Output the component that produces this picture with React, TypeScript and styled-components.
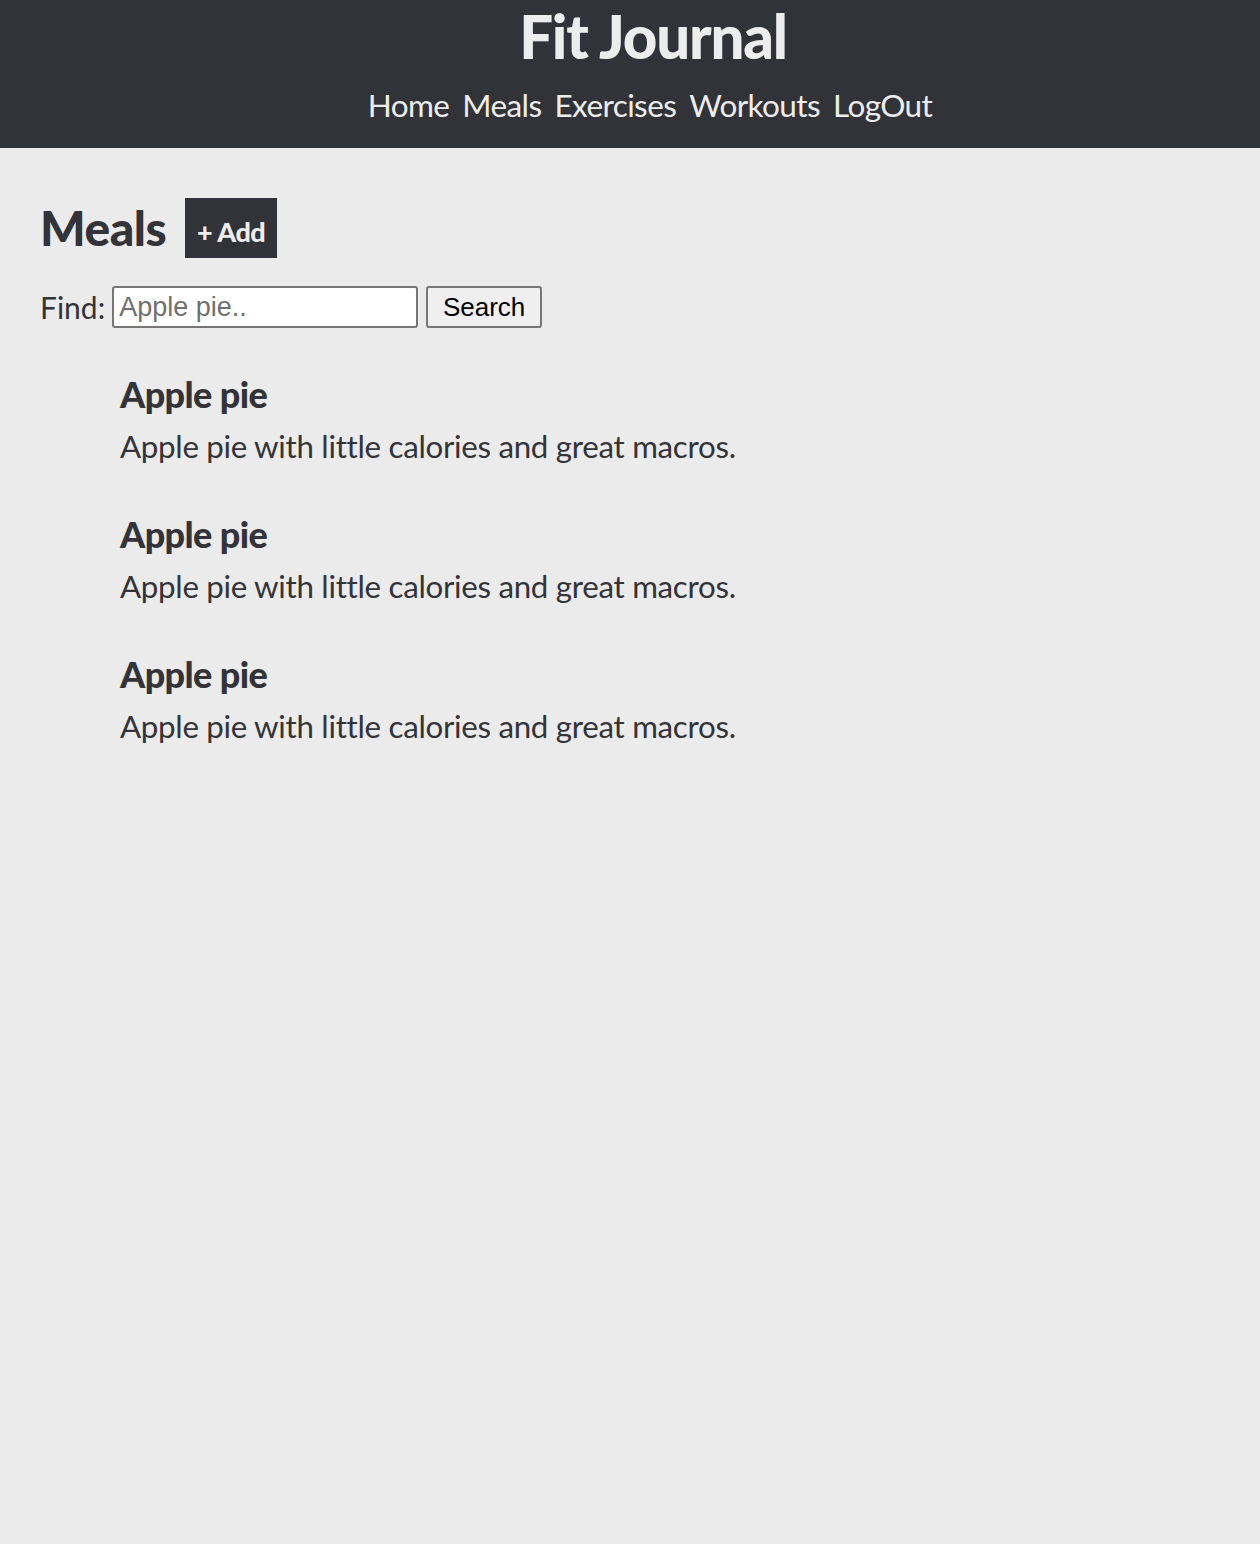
import React from "react";
import styled, { createGlobalStyle } from "styled-components";

const Global = createGlobalStyle`
  html, body { margin: 0; padding: 0; }
  body {
    background: #ebebeb;
    font-family: Lato, "Open Sans", sans-serif;
    color: #333339;
    min-height: 1544px;
  }
`;

const Header = styled.header`
  background: #323338;
  height: 148px;
  box-sizing: border-box;
  padding-left: 40px;
  display: flex;
  flex-direction: column;
  align-items: center;
  color: #ededed;
`;

const Title = styled.h1`
  margin: 0 0 0 6px;
  padding-top: 4px;
  font-size: 60px;
  font-weight: 900;
  line-height: 64px;
  letter-spacing: -1.2px;
`;

const Nav = styled.nav`
  display: flex;
  gap: 13px;
  margin-top: 17px;
`;

const NavLink = styled.a`
  font-size: 31.5px;
  line-height: 40px;
  color: #ededed;
  text-decoration: none;
  letter-spacing: -0.6px;
`;

const Main = styled.main`
  padding: 50px 40px;
`;

const TitleRow = styled.div`
  display: flex;
  align-items: center;
  gap: 19px;
`;

const PageTitle = styled.h2`
  margin: 0;
  font-size: 48px;
  font-weight: 900;
  line-height: 60px;
  letter-spacing: -0.5px;
`;

const AddButton = styled.button`
  background: #323338;
  color: #ededed;
  border: none;
  height: 60px;
  width: 92px;
  font-family: inherit;
  font-weight: 900;
  font-size: 27px;
  letter-spacing: -0.5px;
  padding: 6px 0 0;
  cursor: pointer;
`;

const SearchRow = styled.form`
  display: flex;
  align-items: center;
  margin-top: 28px;
  gap: 8px;
`;

const FindLabel = styled.label`
  font-size: 30px;
  margin-right: -1px;
`;

const SearchInput = styled.input`
  width: 306px;
  height: 42px;
  box-sizing: border-box;
  border: 2px solid #767676;
  border-radius: 3px;
  font-family: "Liberation Sans", Arial, sans-serif;
  font-size: 27px;
  padding: 0 5px;
  background: #fff;
  &::placeholder { color: #6f6f6f; }
`;

const SearchButton = styled.button`
  width: 116px;
  height: 42px;
  box-sizing: border-box;
  border: 2px solid #767676;
  border-radius: 3px;
  background: #efefef;
  font-family: "Liberation Sans", Arial, sans-serif;
  font-size: 26px;
  color: #000;
`;

const List = styled.ul`
  list-style: none;
  margin: 41px 0 0;
  padding: 0 0 0 80px;
  display: flex;
  flex-direction: column;
  gap: 36px;
`;

const Item = styled.li`
  display: flex;
  flex-direction: column;
`;

const ItemTitle = styled.h3`
  margin: 0;
  font-size: 36px;
  font-weight: 900;
  line-height: 50px;
  letter-spacing: -0.6px;
`;

const ItemDesc = styled.p`
  margin: 0;
  font-size: 31.3px;
  line-height: 54px;
  letter-spacing: -0.3px;
`;

const meals = [1, 2, 3].map((i) => ({
  id: i,
  name: "Apple pie",
  desc: "Apple pie with little calories and great macros.",
}));

export default function App() {
  return (
    <>
      <Global />
      <Header>
        <Title>Fit Journal</Title>
        <Nav>
          {["Home", "Meals", "Exercises", "Workouts", "LogOut"].map((l) => (
            <NavLink key={l} href="#">{l}</NavLink>
          ))}
        </Nav>
      </Header>
      <Main>
        <TitleRow>
          <PageTitle>Meals</PageTitle>
          <AddButton>+ Add</AddButton>
        </TitleRow>
        <SearchRow onSubmit={(e) => e.preventDefault()}>
          <FindLabel>Find:</FindLabel>
          <SearchInput placeholder="Apple pie.." />
          <SearchButton type="submit">Search</SearchButton>
        </SearchRow>
        <List>
          {meals.map((m) => (
            <Item key={m.id}>
              <ItemTitle>{m.name}</ItemTitle>
              <ItemDesc>{m.desc}</ItemDesc>
            </Item>
          ))}
        </List>
      </Main>
    </>
  );
}
